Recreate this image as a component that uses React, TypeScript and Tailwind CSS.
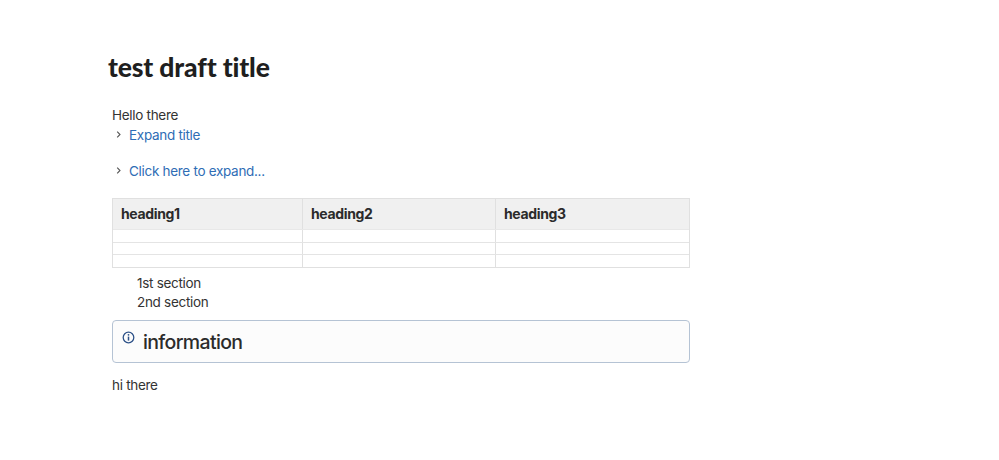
import React from "react";

const Chevron = () => (
  <svg width="9" height="9" viewBox="0 0 9 9" fill="none" className="text-[#555]">
    <path d="M3.2 1.6 L6 4.5 L3.2 7.4" stroke="currentColor" strokeWidth="1.1" />
  </svg>
);

const Expand = ({ label, className }: { label: string; className: string }) => (
  <div className={`flex items-center h-[19px] ${className}`}>
    <span className="w-[17px] pl-[2px] flex items-center"><Chevron /></span>
    <span className="text-[#2f6db5] pt-[1px]">{label}</span>
  </div>
);

const cols = ["w-[190px]", "w-[193px]", "flex-1"];
const rowH = ["h-[13px]", "h-[12px]", "h-[12px]"];

export default function App() {
  return (
    <div className="w-[999px] h-[460px] bg-white overflow-hidden pl-[108px] pt-[50px] font-['Inter',sans-serif] text-[13.5px] tracking-[-0.3px] text-[#333]">
      <h1 className="font-['Lato',sans-serif] font-black tracking-[-0.15px] text-[26.5px] leading-[34px] text-[#1f1f1f]">test draft title</h1>
      <div className="pl-[4px] w-[582px] mt-[22px]">
        <p className="h-[19px] leading-[19px]">Hello there</p>
        <Expand label="Expand title" className="" />
        <Expand label="Click here to expand..." className="mt-[17px]" />
        <div className="mt-[18px] border border-[#e0e0e0]">
          <div className="flex h-[31px] bg-[#f0f0f0] border-b border-[#e8e8e8] text-[14px] tracking-[-0.35px]">
            {["heading1", "heading2", "heading3"].map((h, i) => (
              <div key={h} className={`${cols[i]} ${i < 2 ? "border-r border-[#e0e0e0]" : ""} pl-[8px] pb-[2px] flex items-center font-bold text-[#2b2b2b]`}>{h}</div>
            ))}
          </div>
          {rowH.map((r, j) => (
            <div key={j} className={`flex ${r} ${j < 2 ? "border-b border-[#e4e4e4]" : ""}`}>
              {cols.map((c, i) => (
                <div key={i} className={`${c} ${i < 2 ? "border-r border-[#e0e0e0]" : ""}`} />
              ))}
            </div>
          ))}
        </div>
        <div className="pl-[25px] mt-[6px] leading-[19px]">
          <p>1st section</p>
          <p>2nd section</p>
        </div>
        <div className="mt-[8px] h-[43px] border border-[#b5c3d4] rounded-[4px] bg-[#fcfcfc] flex pl-[9px]">
          <svg width="13" height="13" viewBox="0 0 13 13" fill="none" className="mt-[10px] text-[#2e5288]">
            <circle cx="6.5" cy="6.5" r="5.3" stroke="currentColor" strokeWidth="1.3" />
            <path d="M6.5 5.6 V9.6" stroke="currentColor" strokeWidth="1.5" />
            <circle cx="6.5" cy="3.8" r="0.9" fill="currentColor" />
          </svg>
          <span className="ml-[8px] text-[19.5px] font-medium tracking-[-0.65px] leading-[42px] text-[#2b2b2b]">information</span>
        </div>
        <p className="mt-[13px] leading-[19px]">hi there</p>
      </div>
    </div>
  );
}
